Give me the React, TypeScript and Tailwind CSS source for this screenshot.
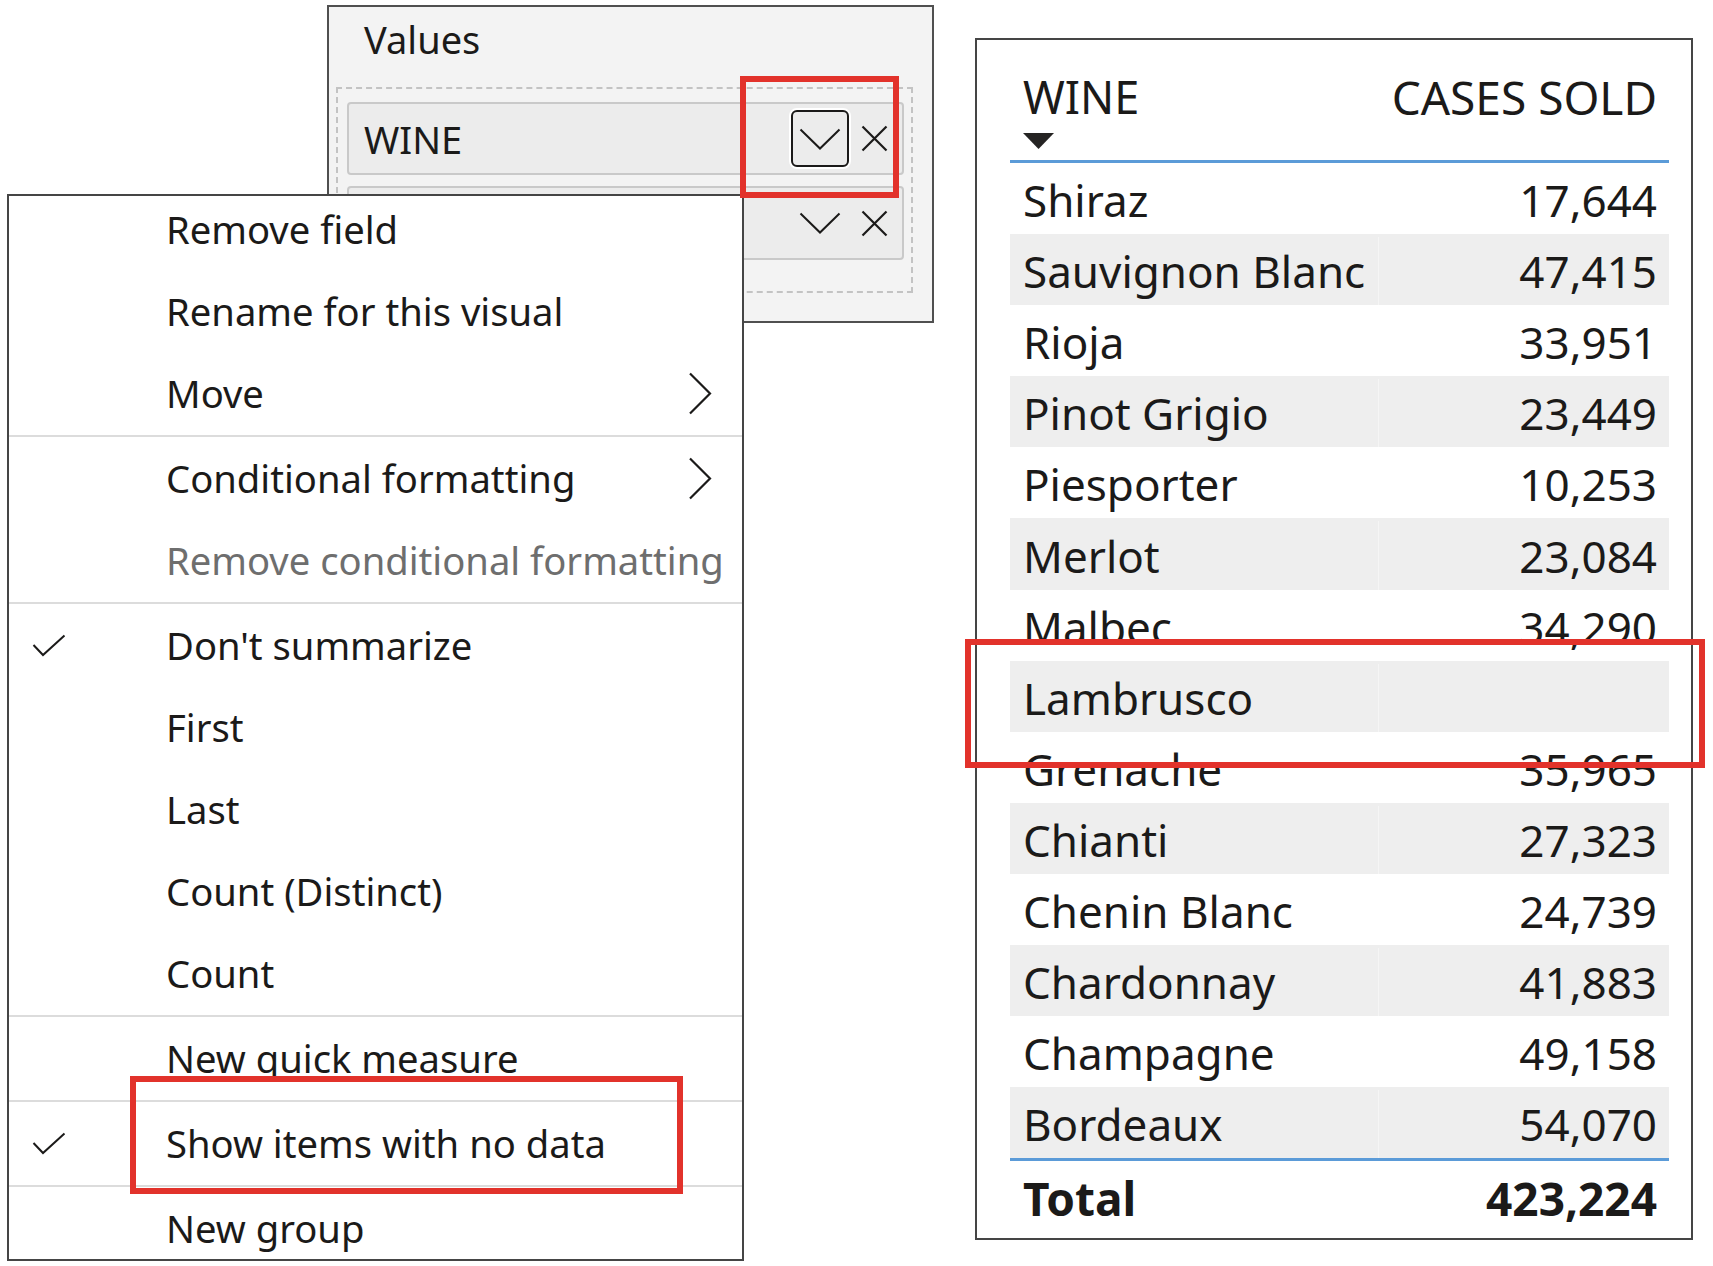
import React from "react";

type MenuEntry =
  | { label: string; check?: boolean; submenu?: boolean; disabled?: boolean }
  | "sep";

const menuEntries: MenuEntry[] = [
  { label: "Remove field" },
  { label: "Rename for this visual" },
  { label: "Move", submenu: true },
  "sep",
  { label: "Conditional formatting", submenu: true },
  { label: "Remove conditional formatting", disabled: true },
  "sep",
  { label: "Don't summarize", check: true },
  { label: "First" },
  { label: "Last" },
  { label: "Count (Distinct)" },
  { label: "Count" },
  "sep",
  { label: "New quick measure" },
  "sep",
  { label: "Show items with no data", check: true },
  "sep",
  { label: "New group" },
];

const wines: [string, string][] = [
  ["Shiraz", "17,644"],
  ["Sauvignon Blanc", "47,415"],
  ["Rioja", "33,951"],
  ["Pinot Grigio", "23,449"],
  ["Piesporter", "10,253"],
  ["Merlot", "23,084"],
  ["Malbec", "34,290"],
  ["Lambrusco", ""],
  ["Grenache", "35,965"],
  ["Chianti", "27,323"],
  ["Chenin Blanc", "24,739"],
  ["Chardonnay", "41,883"],
  ["Champagne", "49,158"],
  ["Bordeaux", "54,070"],
];

function ChevronDown() {
  return (
    <svg width="42" height="22" viewBox="0 0 42 22" fill="none">
      <polyline points="1.5,1.5 21,20.5 40.5,1.5" stroke="#1b1a19" strokeWidth="2" />
    </svg>
  );
}

function CloseX() {
  return (
    <svg width="27" height="27" viewBox="0 0 27 27" fill="none">
      <path d="M1.5 1.5 L25.5 25.5 M25.5 1.5 L1.5 25.5" stroke="#1b1a19" strokeWidth="2.2" />
    </svg>
  );
}

function ValuesPane() {
  return (
    <div className="ml-[327px] mt-[5px] h-[318px] w-[607px] border-2 border-[#505050] bg-[#f3f3f3]">
      <div className="flex h-[64px] items-center pl-[35px] text-[38px] leading-none">Values</div>
      <div className="ml-[7px] mt-[16px] flex h-[206px] w-[577px] flex-col gap-[11px] border-2 border-dashed border-[#c3c3c3] pl-[9px] pr-[7px] pt-[13px]">
        <div className="flex h-[73px] items-center rounded-[4px] border-2 border-[#c9c9c9] bg-[#ececec] pl-[15px] pr-[14px]">
          <span className="text-[38px] leading-none">WINE</span>
          <div className="ml-auto flex h-[57px] w-[58px] items-center justify-center rounded-[6px] border-[2.5px] border-[#1b1a19] shadow-[0_0_0_2px_#ffffff]">
            <ChevronDown />
          </div>
          <div className="ml-[12px] flex items-center">
            <CloseX />
          </div>
        </div>
        <div className="flex h-[74px] items-center rounded-[4px] border-2 border-[#c9c9c9] bg-[#ececec] pl-[15px] pr-[14px]">
          <div className="ml-auto flex h-[57px] w-[58px] items-center justify-center">
            <ChevronDown />
          </div>
          <div className="ml-[12px] flex items-center">
            <CloseX />
          </div>
        </div>
      </div>
    </div>
  );
}

function FieldMenu() {
  return (
    <div className="absolute left-[7px] top-[194px] h-[1067px] w-[737px] overflow-hidden border-2 border-[#454545] bg-white">
      <div className="-mt-[8px] flex flex-col">
        {menuEntries.map((entry, i) => {
          if (entry === "sep") {
            return (
              <div key={i} className="flex h-[3px] items-center">
                <div className="h-[2px] w-full bg-[#dcdcdc]" />
              </div>
            );
          }
          return (
            <div key={i} className="flex h-[82px] shrink-0 items-center">
              <div className="flex w-[157px] shrink-0 items-center pl-[23px]">
                {entry.check && (
                  <svg width="34" height="23" viewBox="0 0 34 23" fill="none">
                    <polyline points="1.5,11 11,21 32.5,1.5" stroke="#1b1a19" strokeWidth="2" />
                  </svg>
                )}
              </div>
              <span
                className={`whitespace-nowrap text-[38.2px] leading-none ${
                  entry.disabled ? "text-[#6e6e6e]" : "text-[#1b1a19]"
                }`}
              >
                {entry.label}
              </span>
              {entry.submenu && (
                <svg className="ml-auto mr-[30px]" width="24" height="43" viewBox="0 0 24 43" fill="none">
                  <polyline points="2,1.5 22,21.5 2,41.5" stroke="#1b1a19" strokeWidth="2.2" />
                </svg>
              )}
            </div>
          );
        })}
      </div>
    </div>
  );
}

function WineTable() {
  return (
    <div className="mt-[38px] h-[1202px] w-[718px] border-2 border-[#454545] bg-white pl-[33px] pr-[22px]">
      <div className="flex h-[120px] justify-between">
        <div className="flex flex-col pl-[13px] pt-[34px]">
          <span className="text-[45px] leading-[46px]">WINE</span>
          <svg className="mt-[13px]" width="31" height="16" viewBox="0 0 31 16">
            <polygon points="0,0 31,0 15.5,16" fill="#252423" />
          </svg>
        </div>
        <div className="pr-[12px] pt-[34px]">
          <span className="text-[46px] leading-[46px]">CASES SOLD</span>
        </div>
      </div>
      <div className="h-[3px] bg-[#5b9bd8]" />
      {wines.map(([name, cases], i) => (
        <div key={name} className={`flex h-[71.1px] items-center pt-[3px] ${i % 2 === 1 ? "bg-[#eeeeee]" : "bg-white"}`}>
          <div className="w-[368px] shrink-0 whitespace-nowrap pl-[13px] text-[44px] leading-none">{name}</div>
          <div
            className={`flex h-full flex-1 items-center justify-end pr-[12px] text-[44px] leading-none ${
              i % 2 === 1 ? "border-l border-[#f5f5f5]" : ""
            }`}
          >
            {cases}
          </div>
        </div>
      ))}
      <div className="h-[3px] bg-[#5b9bd8]" />
      <div className="flex h-[72px] items-center justify-between pt-[2px] text-[46px] font-bold leading-none">
        <span className="pl-[13px]">Total</span>
        <span className="pr-[12px]">423,224</span>
      </div>
    </div>
  );
}

export default function App() {
  return (
    <div className="relative flex h-[1266px] w-[1713px] overflow-hidden bg-white font-['Noto_Sans',sans-serif] text-[#1b1a19]">
      <div className="w-[975px] shrink-0">
        <ValuesPane />
      </div>
      <WineTable />
      <FieldMenu />
      <div className="absolute left-[740px] top-[76px] h-[122px] w-[159px] border-[6px] border-[#e2322b]" />
      <div className="absolute left-[130px] top-[1076px] h-[118px] w-[553px] border-[6px] border-[#e2322b]" />
      <div className="absolute left-[965px] top-[639px] h-[129px] w-[740px] border-[6px] border-[#e2322b]" />
    </div>
  );
}
